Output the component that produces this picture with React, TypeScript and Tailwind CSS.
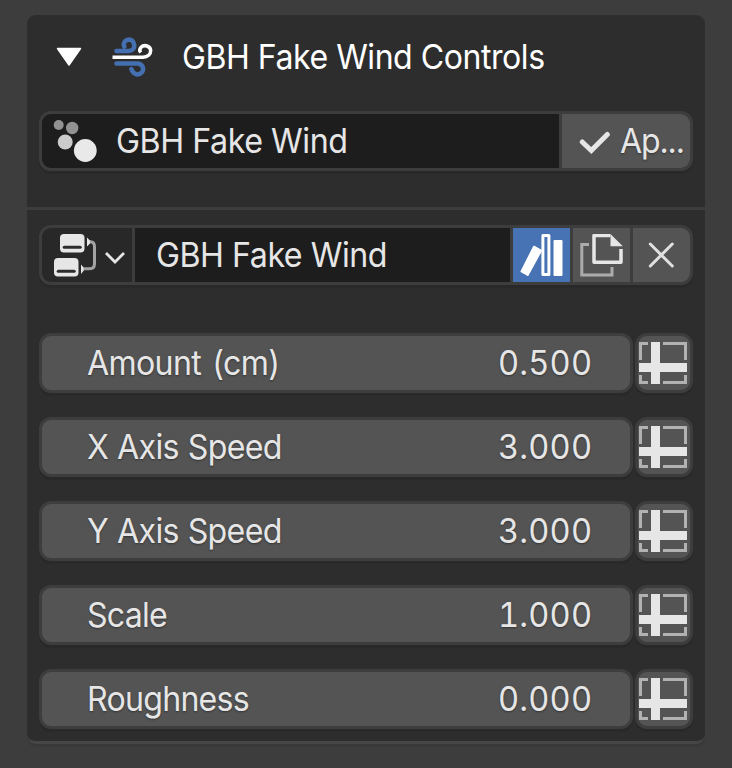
import React from "react";

const WindIcon = () => (
  <svg width="42" height="42" viewBox="0 0 42 42" fill="none" className="shrink-0">
    <g stroke="#446fb0" strokeWidth="4.500" strokeLinecap="round" strokeLinejoin="round">
      <path d="M4.500 14H17c4-.3 6-3.300 5-7C21 2.700 16.800 1.500 13.500 3.800C11.600 5.500 11.300 7.500 12.300 9.500" />
      <path d="M4.500 26.500H26c4.500.7 6.500 5 4 8.700C27 39 21.500 38 19.300 32" />
    </g>
    <path d="M0.500 20.200H31c4.700-.2 7.700-3 7.700-6.600c-.3-4.500-6.200-6.600-9.700-3.300c-1.800 2-1.500 3.700-.3 5.200" stroke="#fff" strokeWidth="3.500" />
  </svg>
);

const PhysicsIcon = () => (
  <svg width="46" height="46" viewBox="0 0 46 46" className="shrink-0">
    <circle cx="5.700" cy="6" r="5" fill="#929292" />
    <circle cx="19.200" cy="9" r="6.200" fill="#929292" />
    <circle cx="12.200" cy="23" r="7.500" fill="#cbcbcb" />
    <circle cx="32.300" cy="31.500" r="11.400" fill="#e9e9e9" />
  </svg>
);

const NodesIcon = () => (
  <svg width="44" height="44" viewBox="0 0 44 44" className="shrink-0">
    <g fill="#e6e6e6">
      <rect x="6" y="0" width="24.500" height="18.500" rx="4" />
      <rect x="0" y="24" width="24.500" height="18.500" rx="4" />
      <path d="M33 3.500l4.500 4.500L33 12.500ZM27 30.500l4 4.500L27 40Z" />
    </g>
    <g fill="#2c2c2c">
      <rect x="8.700" y="11.700" width="19" height="3" rx="1.500" />
      <rect x="2.700" y="35.700" width="19" height="3" rx="1.500" />
    </g>
    <path d="M36 7.800h.5q4 .3 4 5v17q0 5-5 5h-6" fill="none" stroke="#a2a2a2" strokeWidth="3" />
  </svg>
);

const LibraryIcon = () => (
  <svg width="44" height="44" viewBox="0 0 44 44" className="shrink-0">
    <path d="M14 12.700L21 16.700L7.700 41L1.500 37.500Z" fill="#fff" stroke="#fff" strokeWidth="2" strokeLinejoin="round" />
    <path d="M22.900 1.600h6v38.800h-6z" fill="#4772b3" stroke="#fff" strokeWidth="3" strokeLinejoin="round" />
    <rect x="33.500" y="6" width="9" height="36" rx="1" fill="#fff" />
  </svg>
);

const DuplicateIcon = () => (
  <svg width="44" height="44" viewBox="0 0 44 44" fill="none" className="shrink-0">
    <path d="M9 10.500H1.800V41H32V33" stroke="#acacac" strokeWidth="3" />
    <path d="M41 15V28.300H14V1.600H30.500" stroke="#e6e6e6" strokeWidth="3.500" strokeLinejoin="round" />
    <path d="M30.500 0L42.800 12.300H30.500Z" fill="#e6e6e6" />
  </svg>
);

const SpreadsheetIcon = () => (
  <svg width="48" height="43" viewBox="0 0 48 43" className="mr-[2px] shrink-0">
    <path d="M9 1.500H1.500V18M24 1.500H46.500V18M1.500 33V40.500H9M24 40.500H46.500V33" fill="none" stroke="#b2b2b2" strokeWidth="3" />
    <path d="M12 0H21V21H48V30H21V42H12V30H0V21H12Z" fill="#e6e6e6" />
  </svg>
);

const rows = [
  { label: "Amount (cm)", value: "0.500", tracking: "tracking-[-0.7px] [word-spacing:3px]" },
  { label: "X Axis Speed", value: "3.000", tracking: "tracking-[-0.7px] [word-spacing:0.5px]" },
  { label: "Y Axis Speed", value: "3.000", tracking: "tracking-[-0.7px] [word-spacing:0.5px]" },
  { label: "Scale", value: "1.000", tracking: "tracking-[-0.8px]" },
  { label: "Roughness", value: "0.000", tracking: "tracking-[-0.8px]" },
];

export default function App() {
  return (
    <main className="h-[768px] w-[732px] overflow-hidden bg-[#3d3d3d] pl-[27px] pt-[15px] font-['Inter',sans-serif] text-[34px] leading-[40px] text-[#e6e6e6]">
      <section className="h-[729px] w-[678px] rounded-[9px] border-b-[3px] border-[#464646] bg-[#2d2d2d] shadow-[0_3px_0_#393939]">
        <header className="flex h-24 items-start pt-[22px] text-white">
          <svg width="26" height="20" viewBox="0 0 26 20" className="ml-[29px] mt-[10px] shrink-0">
            <path d="M1.500 1.500H24.500L13 18Z" fill="#fff" stroke="#fff" strokeWidth="1.500" strokeLinejoin="round" />
          </svg>
          <div className="ml-[30px]"><WindIcon /></div>
          <h1 className="ml-[28px] origin-left scale-x-[0.943] whitespace-nowrap tracking-[-0.5px]">GBH Fake Wind Controls</h1>
        </header>
        <div className="ml-[12px] flex h-[60px] w-[654px] overflow-hidden rounded-[12px] border-[3px] border-[#3d3d3d] bg-[#1d1d1d] shadow-[0_3px_0_#292929]">
          <div className="flex flex-1 pl-[11px] pt-[5px]">
            <PhysicsIcon />
            <span className="ml-[17px] mt-[2px] origin-left scale-x-[0.948] whitespace-nowrap tracking-[-0.5px]">GBH Fake Wind</span>
          </div>
          <button className="flex w-[131px] border-l-[3px] border-[#3d3d3d] bg-[#545454] pl-[17px] text-left">
            <svg width="32" height="24" viewBox="0 0 32 24" fill="none" className="mt-[17px] shrink-0">
              <path d="M3.300 11L12.300 19.500L28.300 3.500" stroke="#e6e6e6" strokeWidth="5" strokeLinecap="round" />
            </svg>
            <span className="ml-[9px] mt-[7px] origin-left scale-x-[0.943] tracking-[-1.2px] [text-shadow:0_1px_2px_#333]">Ap...</span>
          </button>
        </div>
        <hr className="mt-[36px] border-t-[3px] border-[#3d3d3d]" />
        <div className="ml-[12px] mt-[15px] flex h-[60px] w-[654px] overflow-hidden rounded-[12px] border-[3px] border-[#3d3d3d] bg-[#3d3d3d] shadow-[0_3px_0_#292929]">
          <button className="flex w-[90px] bg-[#282828] pl-[12px] pt-[6px]">
            <NodesIcon />
            <svg width="20" height="13" viewBox="0 0 20 13" fill="none" className="ml-[7px] mt-[18px] shrink-0">
              <path d="M1 1L10 10L19 1" stroke="#e6e6e6" strokeWidth="2.800" />
            </svg>
          </button>
          <div className="ml-[3px] w-[375px] bg-[#1d1d1d] pl-[21px] pt-[7px]">
            <span className="block origin-left scale-x-[0.946] whitespace-nowrap tracking-[-0.5px]">GBH Fake Wind</span>
          </div>
          <button className="ml-[3px] flex w-[57px] bg-[#4772b3] pl-[7px] pt-[6px]"><LibraryIcon /></button>
          <button className="ml-[3px] flex w-[57px] bg-[#545454] pl-[7px] pt-[6px]"><DuplicateIcon /></button>
          <button className="ml-[3px] flex flex-1 bg-[#545454] pl-[15px] pt-[14px]">
            <svg width="26" height="26" viewBox="0 0 26 26" fill="none">
              <path d="M2.300 2L24.300 24M24.300 2L2.300 24" stroke="#e0e0e0" strokeWidth="3" strokeLinecap="round" />
            </svg>
          </button>
        </div>
        <div className="mt-[48px] flex flex-col gap-6 pl-[12px]">
          {rows.map((row) => (
            <div key={row.label} className="flex h-[60px] gap-[2px] [text-shadow:0_1px_2px_#333]">
              <div className="flex h-[60px] w-[594px] items-center justify-between rounded-[12px] border-[3px] border-[#3d3d3d] bg-[#545454] pl-[45px] pr-[37.5px] shadow-[0_3px_0_#292929]">
                <span className={`origin-left scale-x-[0.945] ${row.tracking}`}>{row.label}</span>
                <span className="origin-right scale-x-[0.96] tracking-[0.2px] tabular-nums">{row.value}</span>
              </div>
              <button className="flex h-[60px] w-[58px] items-center justify-center rounded-[12px] border-[3px] border-[#3d3d3d] bg-[#545454] shadow-[0_3px_0_#292929]">
                <SpreadsheetIcon />
              </button>
            </div>
          ))}
        </div>
      </section>
    </main>
  );
}
